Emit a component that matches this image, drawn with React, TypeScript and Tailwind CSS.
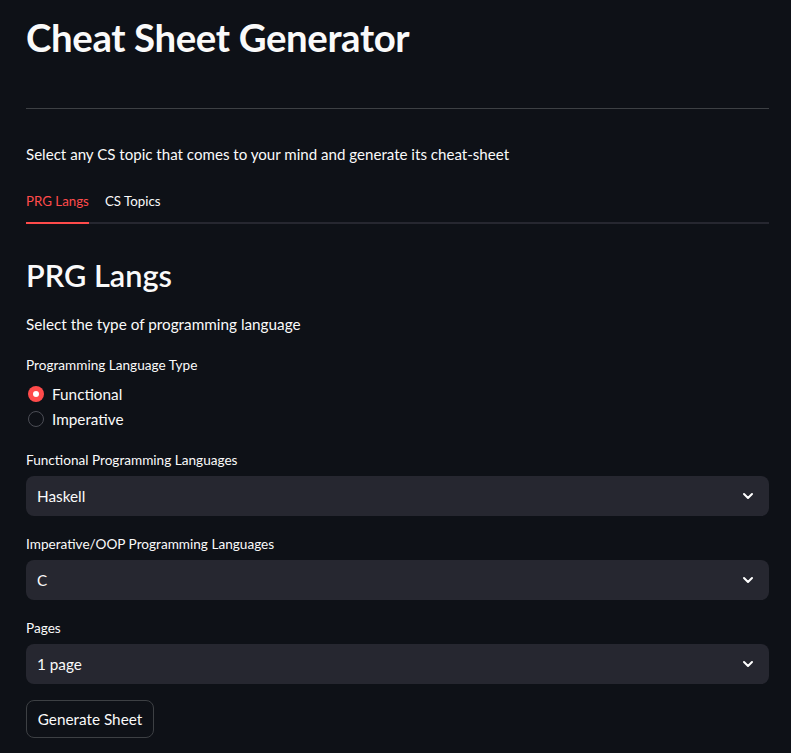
import { ChevronDown } from 'lucide-react'

const font = { fontFamily: 'Lato, "Noto Sans", sans-serif' }

function Radio({ label, checked }: { label: string; checked?: boolean }) {
  return (
    <div className="flex h-[24px] items-center gap-[8px] pl-[2px]">
      {checked ? (
        <span className="flex h-[16px] w-[16px] items-center justify-center rounded-full bg-[#ff4b4b]">
          <span className="h-[6px] w-[6px] rounded-full bg-white" />
        </span>
      ) : (
        <span className="h-[16px] w-[16px] rounded-full border border-[#4b4d55] bg-[#0e1117]" />
      )}
      <span className="text-[15.3px]">{label}</span>
    </div>
  )
}

function Select({ label, value, top }: { label: string; value: string; top: string }) {
  return (
    <>
      <div className={`flex h-[20px] items-center text-[13.6px] ${top}`}>{label}</div>
      <div className="mt-[6px] flex h-[40px] items-center justify-between rounded-[8px] bg-[#262730] pl-[11px] pr-[13px]">
        <span className="text-[15.3px]">{value}</span>
        <ChevronDown size={16} strokeWidth={3} className="text-white" />
      </div>
    </>
  )
}

export default function App() {
  return (
    <div className="h-screen overflow-hidden bg-[#0e1117] pl-[26px] pr-[22px] text-[#fafafa]" style={font}>
      {/* Title */}
      <div className="flex h-[74px] items-center">
        <h1 className="text-[38.4px] font-bold leading-none tracking-[-0.01em]">Cheat Sheet Generator</h1>
      </div>
      <div className="mt-[34px] h-px bg-[#3d4044]" />

      <div className="mt-[25px] flex h-[40px] items-center text-[15.1px]">
        Select any CS topic that comes to your mind and generate its cheat-sheet
      </div>

      {/* Tabs */}
      <div className="mt-[8px] flex gap-[16px] border-b-2 border-[#262730]">
        <div className="-mb-[2px] flex h-[42px] items-center border-b-2 border-[#ff4b4b] text-[13.3px] text-[#ff4b4b]">
          PRG Langs
        </div>
        <div className="flex h-[40px] items-center text-[13.3px]">CS Topics</div>
      </div>

      <div className="mt-[32px] flex h-[40px] items-center">
        <h2 className="text-[30.7px] font-semibold leading-none">PRG Langs</h2>
      </div>
      <div className="mt-[8px] flex h-[40px] items-center text-[15.3px]">Select the type of programming language</div>

      <div className="mt-[11px] flex h-[20px] items-center text-[13.6px]">Programming Language Type</div>
      <div className="mt-[7px]">
        <Radio label="Functional" checked />
      </div>
      <div className="mt-[1px]">
        <Radio label="Imperative" />
      </div>

      <Select label="Functional Programming Languages" value="Haskell" top="mt-[19px]" />
      <Select label="Imperative/OOP Programming Languages" value="C" top="mt-[18px]" />
      <Select label="Pages" value="1 page" top="mt-[18px]" />

      <button className="mt-[16px] flex h-[38px] w-[128px] items-center justify-center rounded-[8px] border border-[#3d4044] bg-[#0e1117] text-[15.3px]">
        Generate Sheet
      </button>
    </div>
  )
}
